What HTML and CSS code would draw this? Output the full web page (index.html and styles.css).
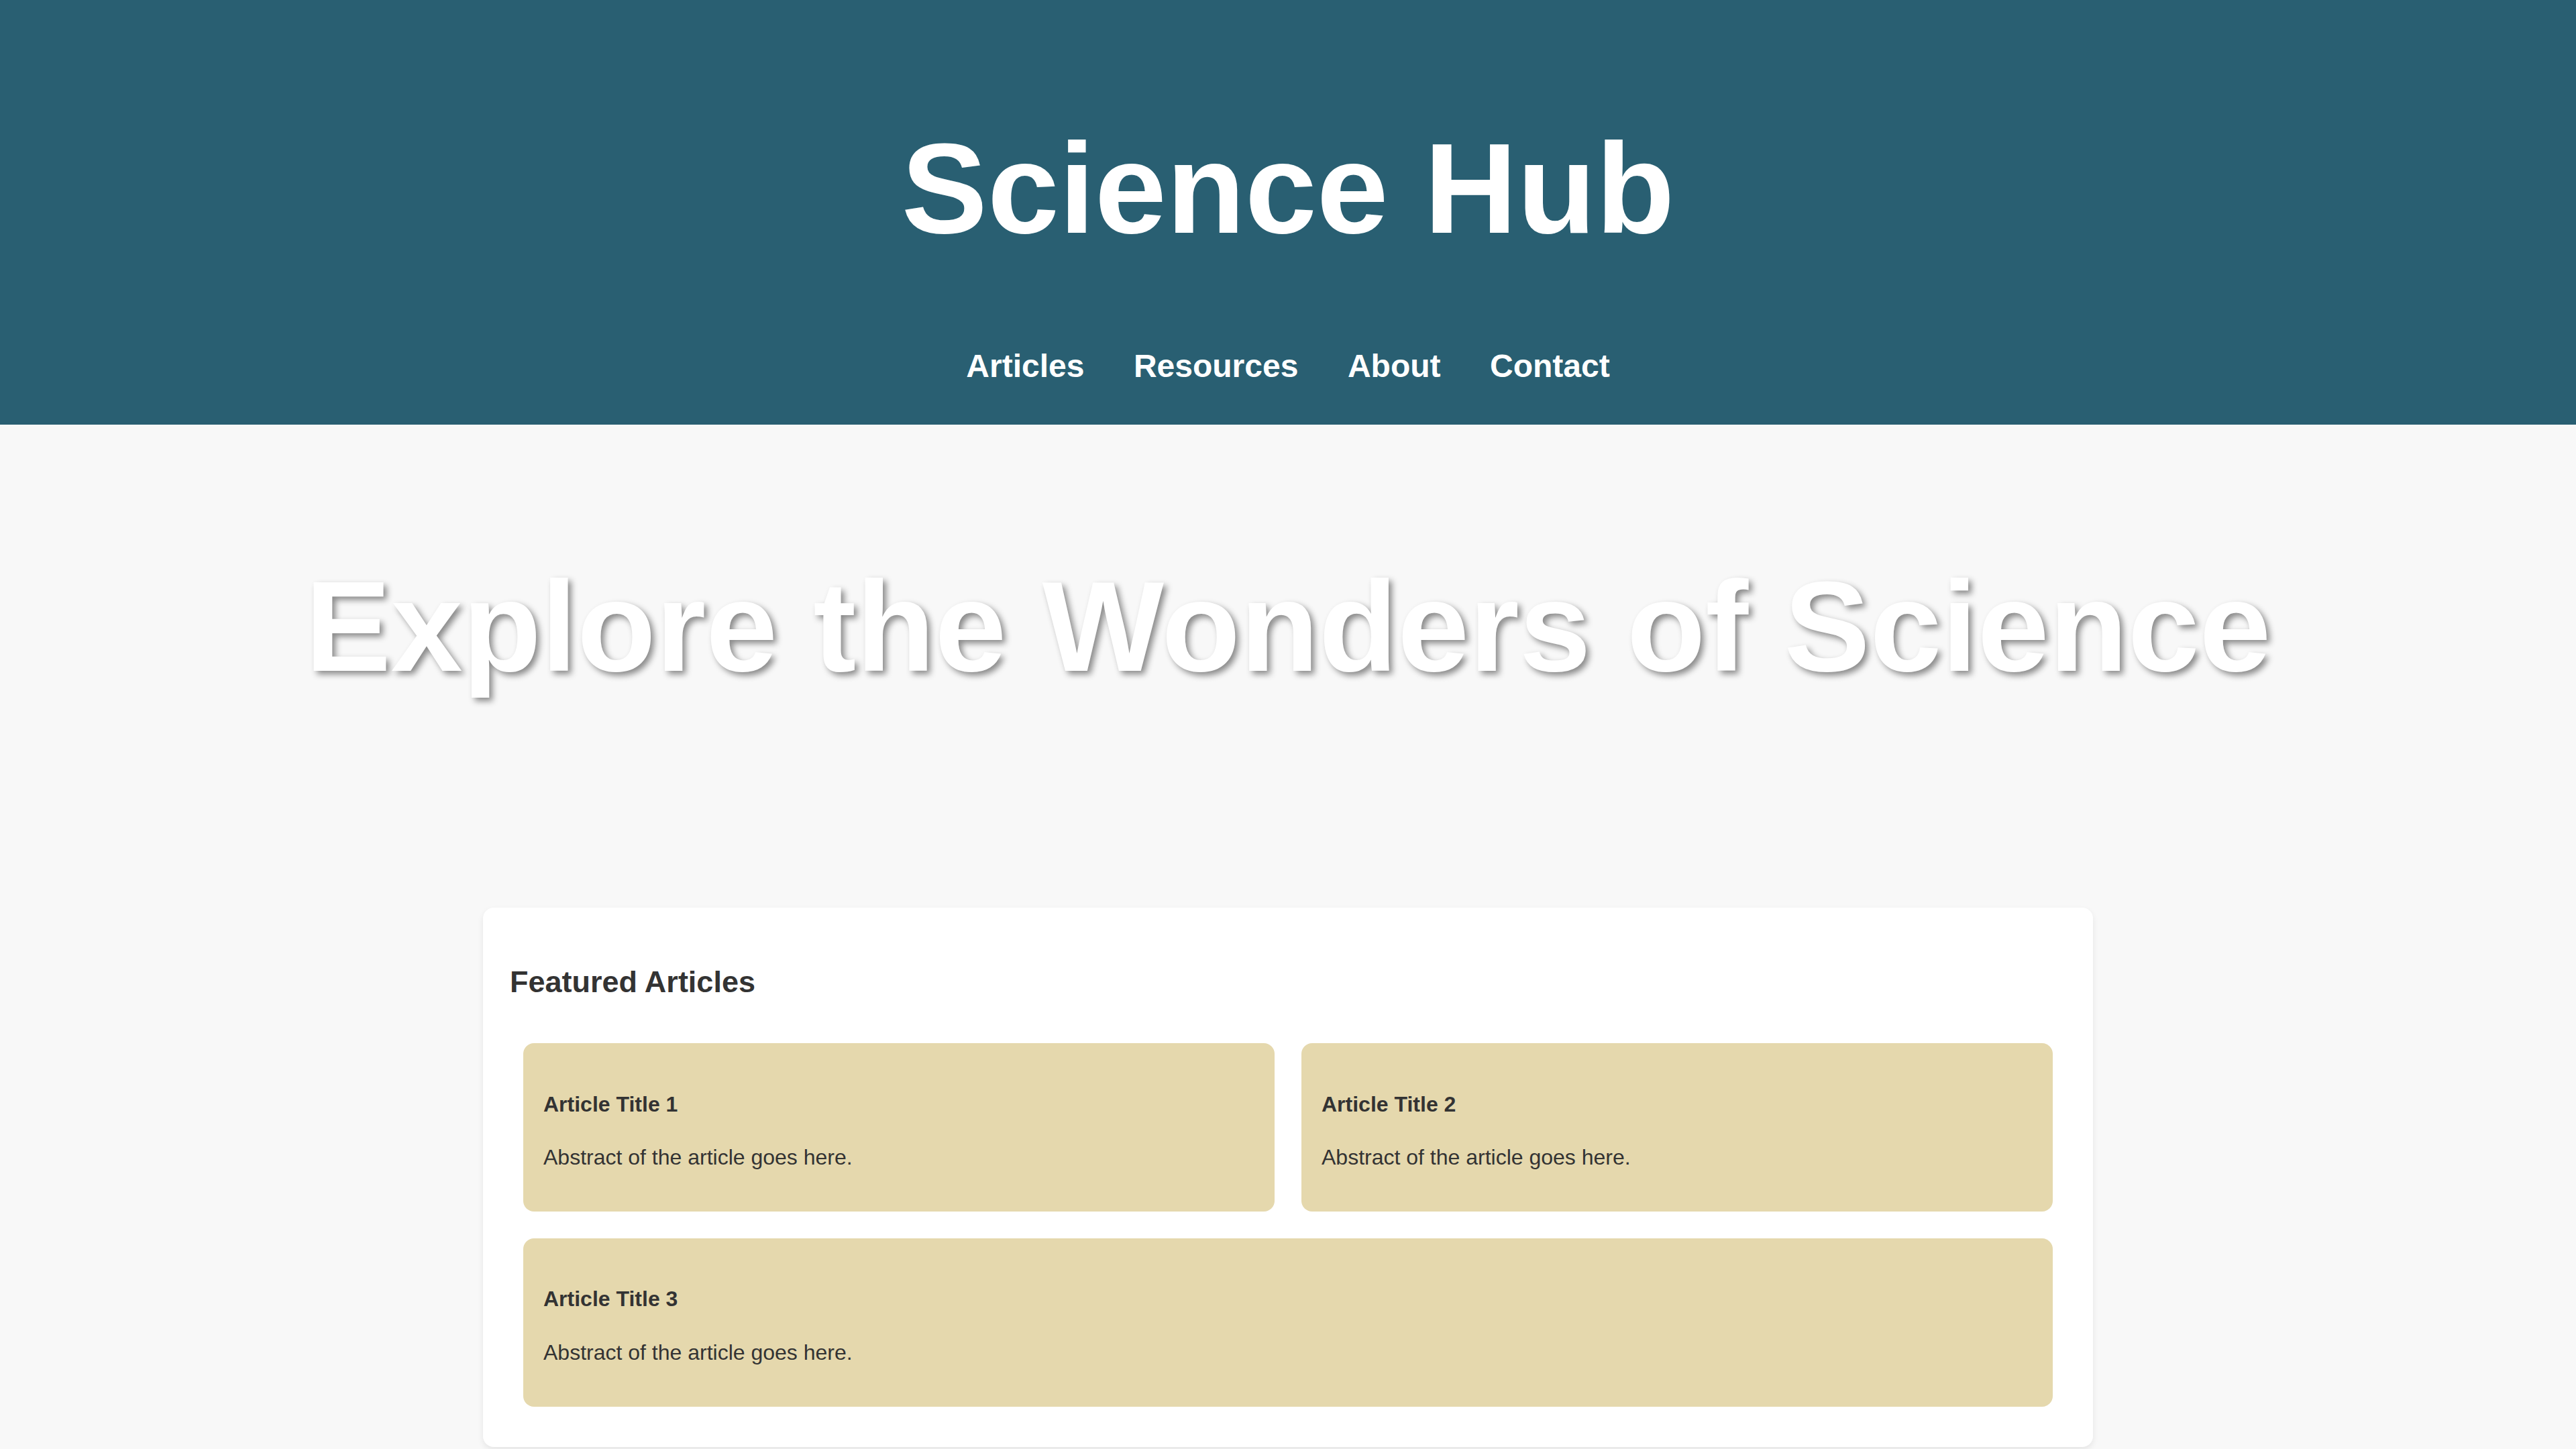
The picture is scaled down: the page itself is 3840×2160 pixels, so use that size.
FILE: index.html
```html
<!DOCTYPE html>
<html lang="en">
<head>
<meta charset="utf-8">
<title>Science Hub</title>
<link rel="stylesheet" href="styles.css">
</head>
<body>
<header class="site-header">
  <h1 class="site-title">Science Hub</h1>
  <nav class="site-nav">
    <a href="#" class="nav-link">Articles</a>
    <a href="#" class="nav-link">Resources</a>
    <a href="#" class="nav-link">About</a>
    <a href="#" class="nav-link">Contact</a>
  </nav>
</header>
<section class="hero">
  <h2 class="hero-title">Explore the Wonders of Science</h2>
</section>
<main class="featured">
  <h2 class="featured-title">Featured Articles</h2>
  <div class="article-grid">
    <article class="article-card">
      <h3 class="article-title">Article Title 1</h3>
      <p class="article-abstract">Abstract of the article goes here.</p>
    </article>
    <article class="article-card">
      <h3 class="article-title">Article Title 2</h3>
      <p class="article-abstract">Abstract of the article goes here.</p>
    </article>
    <article class="article-card article-wide">
      <h3 class="article-title">Article Title 3</h3>
      <p class="article-abstract">Abstract of the article goes here.</p>
    </article>
  </div>
</main>
</body>
</html>
```
FILE: styles.css
```css
html, body {
  margin: 0;
  padding: 0;
}
body {
  background: #f8f8f8;
  color: #333333;
  font-family: "Liberation Sans", Arial, sans-serif;
  padding-bottom: 40px;
}
.site-header {
  background: #295f72;
  padding: 43px 0 59px;
  text-align: center;
}
.site-title {
  margin: 128px 0 127px;
  font-size: 192px;
  line-height: 220px;
  font-weight: 700;
  color: #ffffff;
}
.site-nav {
  display: flex;
  justify-content: center;
  gap: 73.5px;
}
.nav-link {
  color: #ffffff;
  text-decoration: none;
  font-weight: 700;
  font-size: 48px;
  line-height: 56px;
}
.hero {
  padding: 191px 0 309px;
  text-align: center;
}
.hero-title {
  margin: 0;
  font-size: 192px;
  line-height: 220px;
  font-weight: 700;
  color: #ffffff;
  text-shadow: 5px 5px 10px rgba(0, 0, 0, 0.45);
}
.featured {
  width: 2400px;
  box-sizing: border-box;
  margin: 0 auto;
  padding: 40px;
  background: #ffffff;
  border-radius: 16px;
  box-shadow: 0 4px 10px rgba(0, 0, 0, 0.08);
}
.featured-title {
  margin: 45px 0 45px;
  font-size: 45px;
  line-height: 52px;
  font-weight: 700;
}
.article-grid {
  display: grid;
  grid-template-columns: 1fr 1fr;
  gap: 40px;
  padding: 20px;
}
.article-card {
  background: #e5d8ad;
  border-radius: 16px;
  padding: 30px;
}
.article-wide {
  grid-column: 1 / span 2;
}
.article-title {
  margin: 42.6px 0;
  font-size: 32px;
  line-height: 36.8px;
  font-weight: 700;
}
.article-abstract {
  margin: 32px 0;
  font-size: 32px;
  line-height: 36.8px;
}
```
